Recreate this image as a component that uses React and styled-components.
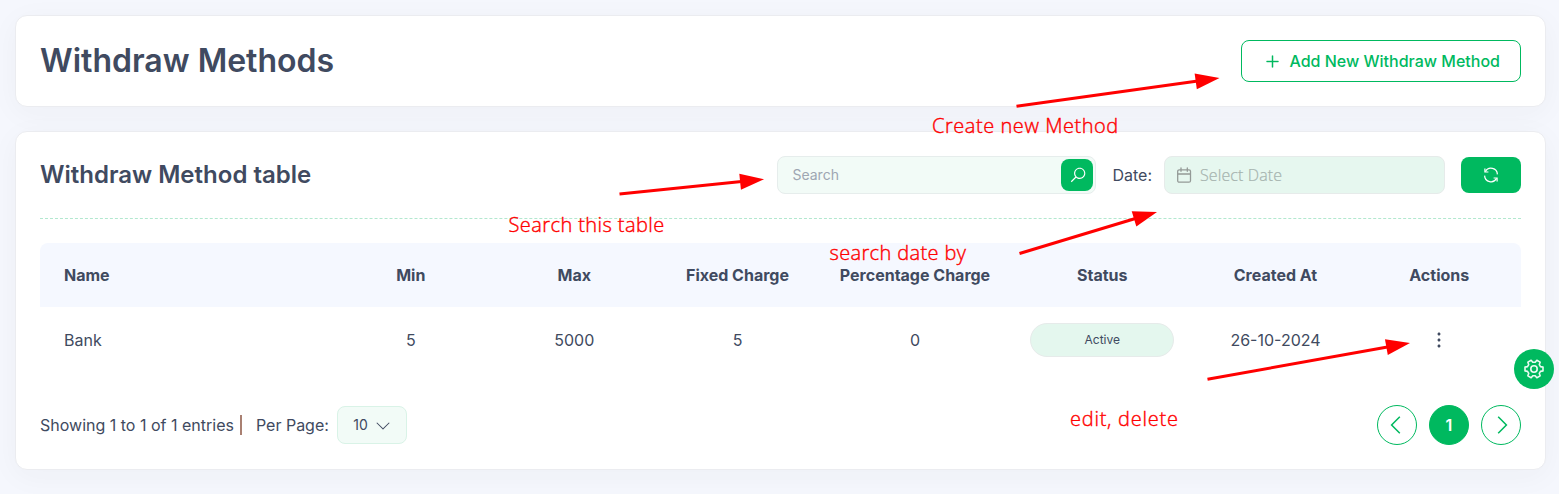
import React from "react";
import styled, { createGlobalStyle, css } from "styled-components";
import {
  LiaPlusSolid,
  LiaSearchSolid,
  LiaAngleDownSolid,
  LiaAngleLeftSolid,
  LiaAngleRightSolid,
  LiaEllipsisVSolid,
} from "react-icons/lia";

const GREEN = "#00b95f";
const INK = "#404a60";

const Global = createGlobalStyle`
  *, *::before, *::after { box-sizing: border-box; }
  body {
    margin: 0;
    background: #f5f7fd;
    color: ${INK};
    font: 400 16px/24px Inter, "Liberation Sans", sans-serif;
    overflow: hidden;
  }
  button, input { font: inherit; color: inherit; margin: 0; }
  svg { display: block; flex: none; }
`;

const Page = styled.main`
  position: relative;
  display: flex;
  flex-direction: column;
  gap: 24px;
  height: 494px;
  padding: 15px 13px 24px 15px;
`;

const Card = styled.section`
  background: #fff;
  border: 1px solid #ebecf0;
  border-radius: 12px;
  padding: 24px;
  box-shadow: 0 6px 30px rgba(40, 40, 60, 0.04);
`;

const HeadingCard = styled(Card)`
  display: flex;
  align-items: center;
  justify-content: space-between;
`;

const TableCard = styled(Card)`
  height: 339px;
`;

const Title = styled.h1`
  margin: 0;
  font-size: 32px;
  line-height: 40px;
  font-weight: 600;
`;

const Subtitle = styled.h2`
  margin: 0;
  font-size: 24px;
  line-height: 32px;
  font-weight: 600;
`;

const AddButton = styled.button`
  display: flex;
  align-items: center;
  gap: 9px;
  width: 280px;
  height: 42px;
  padding: 0 0 0 21.5px;
  border: 1px solid ${GREEN};
  border-radius: 8px;
  background: #fff;
  color: ${GREEN};
  font-weight: 500;
  white-space: nowrap;
  svg { stroke: currentColor; stroke-width: 0.8; }
`;

const Toolbar = styled.div`
  display: flex;
  align-items: center;
  justify-content: space-between;
  height: 63px;
  padding-bottom: 24px;
  border-bottom: 1px dashed #b2e8cf;
`;

const Filters = styled.div`
  display: flex;
  align-items: center;
`;

const SearchBox = styled.label`
  display: flex;
  align-items: center;
  width: 319px;
  height: 38px;
  padding: 0 2px 0 14px;
  border: 1px solid #e6edec;
  border-radius: 8px;
  background: #f2fbf7;
`;

const SearchInput = styled.input`
  flex: 1;
  min-width: 0;
  padding: 0;
  border: 0;
  outline: 0;
  background: transparent;
  font-size: 14px;
  &::placeholder { color: #9ea6b2; opacity: 1; }
`;

const SearchButton = styled.button`
  display: flex;
  align-items: center;
  width: 32px;
  height: 32px;
  padding: 0 0 0 8px;
  border: 0;
  border-radius: 8px;
  background: ${GREEN};
  color: #fff;
`;

const DateLabel = styled.span`
  margin: 0 12px 0 16px;
`;

const DateField = styled.div`
  display: flex;
  align-items: center;
  gap: 7px;
  width: 281px;
  height: 38px;
  padding: 0 11px;
  border: 1px solid #e6ebea;
  border-radius: 8px;
  background: #e6f7ef;
  color: #949a97;
`;

const DatePlaceholder = styled.span`
  font: 300 16px/24px "Open Sans", sans-serif;
  letter-spacing: 0.1px;
  -webkit-text-stroke: 0.2px;
  color: #a5b3ae;
`;

const RefreshButton = styled.button`
  display: grid;
  place-items: center;
  width: 60px;
  height: 36px;
  margin-left: 16px;
  padding: 0;
  border: 0;
  border-radius: 8px;
  background: ${GREEN};
  color: #fff;
`;

const Table = styled.div`
  margin-top: 24px;
`;

const Row = styled.div`
  display: grid;
  grid-template-columns: 289px 163.5px 163.5px 163px 192px 182.5px 164px 1fr;
  align-items: center;
  height: 66px;
  ${(p) =>
    p.$head &&
    css`
      height: 64px;
      border-radius: 8px 8px 0 0;
      background: #f5f8ff;
      font-weight: 700;
    `}
`;

const Cell = styled.div`
  display: flex;
  justify-content: ${(p) => (p.$start ? "flex-start" : "center")};
  padding-left: ${(p) => (p.$start ? "24px" : "0")};
  white-space: nowrap;
`;

const StatusPill = styled.span`
  display: grid;
  place-items: center;
  width: 144px;
  height: 34px;
  border: 1px solid #e6ebea;
  border-radius: 17px;
  background: #e4f7ee;
  font-size: 12px;
`;

const Footer = styled.footer`
  display: flex;
  align-items: center;
  justify-content: space-between;
  height: 40px;
  margin-top: 32px;
`;

const Summary = styled.div`
  display: flex;
  align-items: center;
  white-space: pre;
`;

const Divider = styled.span`
  width: 2px;
  height: 20px;
  margin: 0 14px 0 6px;
  background: #a98072;
`;

const PageSize = styled.button`
  display: flex;
  align-items: center;
  gap: 7px;
  width: 70px;
  height: 38px;
  margin-left: 8px;
  padding: 0 0 0 15.5px;
  border: 1px solid #d9f3e7;
  border-radius: 8px;
  background: #f2fbf7;
  font-size: 14px;
`;

const Pager = styled.nav`
  display: flex;
  gap: 12px;
`;

const PageButton = styled.button`
  display: grid;
  place-items: center;
  width: 40px;
  height: 40px;
  padding: 0;
  border: 1px solid ${GREEN};
  border-radius: 50%;
  background: ${(p) => (p.$active ? GREEN : "#fff")};
  color: ${(p) => (p.$active ? "#fff" : GREEN)};
  font-weight: 600;
`;

const SettingsButton = styled.button`
  position: absolute;
  top: 349px;
  right: 5px;
  display: grid;
  place-items: center;
  width: 40px;
  height: 40px;
  padding: 0;
  border: 0;
  border-radius: 50%;
  background: ${GREEN};
  color: #e9faf1;
`;

const Arrows = styled.svg`
  position: absolute;
  inset: 0;
  pointer-events: none;
`;

const Note = styled.span`
  position: absolute;
  left: ${(p) => p.$x}px;
  top: ${(p) => p.$y}px;
  font: 300 20px/28px "Open Sans", sans-serif;
  letter-spacing: ${(p) => p.$track}px;
  -webkit-text-stroke: 0.4px #f00;
  color: #f00;
  white-space: nowrap;
`;

const COLUMNS = ["Name", "Min", "Max", "Fixed Charge", "Percentage Charge", "Status", "Created At", "Actions"];

const ARROWS = [
  [1016.5, 106.2, 1219.5, 78],
  [619.5, 194, 764, 179.3],
  [1019.5, 253.5, 1157, 212],
  [1207.5, 379.3, 1410, 343],
];

const NOTES = [
  ["Create new Method", 932, 112, 0.55],
  ["Search this table", 508.5, 211, 0.42],
  ["search date by", 829.5, 239, 0.36],
  ["edit, delete", 1070, 405, 0.75],
];

function Arrow({ points: [x1, y1, x2, y2] }) {
  const length = Math.hypot(x2 - x1, y2 - y1);
  const angle = (Math.atan2(y2 - y1, x2 - x1) * 180) / Math.PI;
  return (
    <g transform={`translate(${x1} ${y1}) rotate(${angle})`}>
      <path d={`M0 0H${length - 20}`} stroke="#f00" strokeWidth="3" />
      <path d={`M${length} 0L${length - 24} -8V8Z`} fill="#f00" />
    </g>
  );
}

function CalendarIcon() {
  return (
    <svg width="17" height="17" viewBox="0 0 17 17" fill="none" stroke="currentColor" strokeWidth="1.3" strokeLinecap="round">
      <rect x="1.7" y="2.8" width="12.8" height="12.4" rx="1.5" />
      <path d="M2 7H14.4M5 1V4.3M11.3 1V4.3" />
    </svg>
  );
}

function RefreshIcon() {
  return (
    <svg width="16" height="16" viewBox="0 0 16 16" fill="none" stroke="currentColor" strokeWidth="1.2">
      <path d="M2.4 4.6A6.4 6.4 0 0 1 14.4 7.4M13.6 11.4A6.4 6.4 0 0 1 1.6 8.6" />
      <path d="M1.9 1.6V5H5.4M14.1 14.4V11H10.6" />
    </svg>
  );
}

/* Six-lobed gear outline, built from points around the centre. */
function GearIcon() {
  const at = (radius, degrees) => {
    const a = (degrees * Math.PI) / 180;
    return `${(10 + radius * Math.cos(a)).toFixed(2)} ${(10 + radius * Math.sin(a)).toFixed(2)}`;
  };
  const points = [0, 60, 120, 180, 240, 300].flatMap((d) => [
    at(9.2, d - 12),
    at(9.2, d + 12),
    at(6.9, d + 20),
    at(6.9, d + 40),
  ]);
  return (
    <svg width="20" height="20" viewBox="0 0 20 20" fill="none" stroke="currentColor" strokeWidth="1.6" strokeLinejoin="round">
      <path d={`M${points.join("L")}Z`} />
      <circle cx="10" cy="10" r="3.2" />
    </svg>
  );
}

export default function App() {
  return (
    <Page>
      <Global />
      <HeadingCard>
        <Title>Withdraw Methods</Title>
        <AddButton>
          <LiaPlusSolid size={17} />
          Add New Withdraw Method
        </AddButton>
      </HeadingCard>

      <TableCard>
        <Toolbar>
          <Subtitle>Withdraw Method table</Subtitle>
          <Filters>
            <SearchBox>
              <SearchInput placeholder="Search" />
              <SearchButton aria-label="Search">
                <LiaSearchSolid size={18} />
              </SearchButton>
            </SearchBox>
            <DateLabel>Date:</DateLabel>
            <DateField>
              <CalendarIcon />
              <DatePlaceholder>Select Date</DatePlaceholder>
            </DateField>
            <RefreshButton aria-label="Refresh">
              <RefreshIcon />
            </RefreshButton>
          </Filters>
        </Toolbar>

        <Table>
          <Row $head>
            {COLUMNS.map((name, i) => (
              <Cell key={name} $start={i === 0}>{name}</Cell>
            ))}
          </Row>
          <Row>
            <Cell $start>Bank</Cell>
            <Cell>5</Cell>
            <Cell>5000</Cell>
            <Cell>5</Cell>
            <Cell>0</Cell>
            <Cell><StatusPill>Active</StatusPill></Cell>
            <Cell>26-10-2024</Cell>
            <Cell><LiaEllipsisVSolid size={24} /></Cell>
          </Row>
        </Table>

        <Footer>
          <Summary>
            Showing 1 to 1 of 1 entries
            <Divider />
            Per Page:
            <PageSize>
              10
              <LiaAngleDownSolid size={16} />
            </PageSize>
          </Summary>
          <Pager>
            <PageButton aria-label="Previous"><LiaAngleLeftSolid size={24} /></PageButton>
            <PageButton $active>1</PageButton>
            <PageButton aria-label="Next"><LiaAngleRightSolid size={24} /></PageButton>
          </Pager>
        </Footer>
      </TableCard>

      <SettingsButton aria-label="Settings">
        <GearIcon />
      </SettingsButton>

      <Arrows width="1559" height="494" viewBox="0 0 1559 494">
        {ARROWS.map((points) => (
          <Arrow key={points[0]} points={points} />
        ))}
      </Arrows>
      {NOTES.map(([text, x, y, track]) => (
        <Note key={text} $x={x} $y={y} $track={track}>{text}</Note>
      ))}
    </Page>
  );
}
